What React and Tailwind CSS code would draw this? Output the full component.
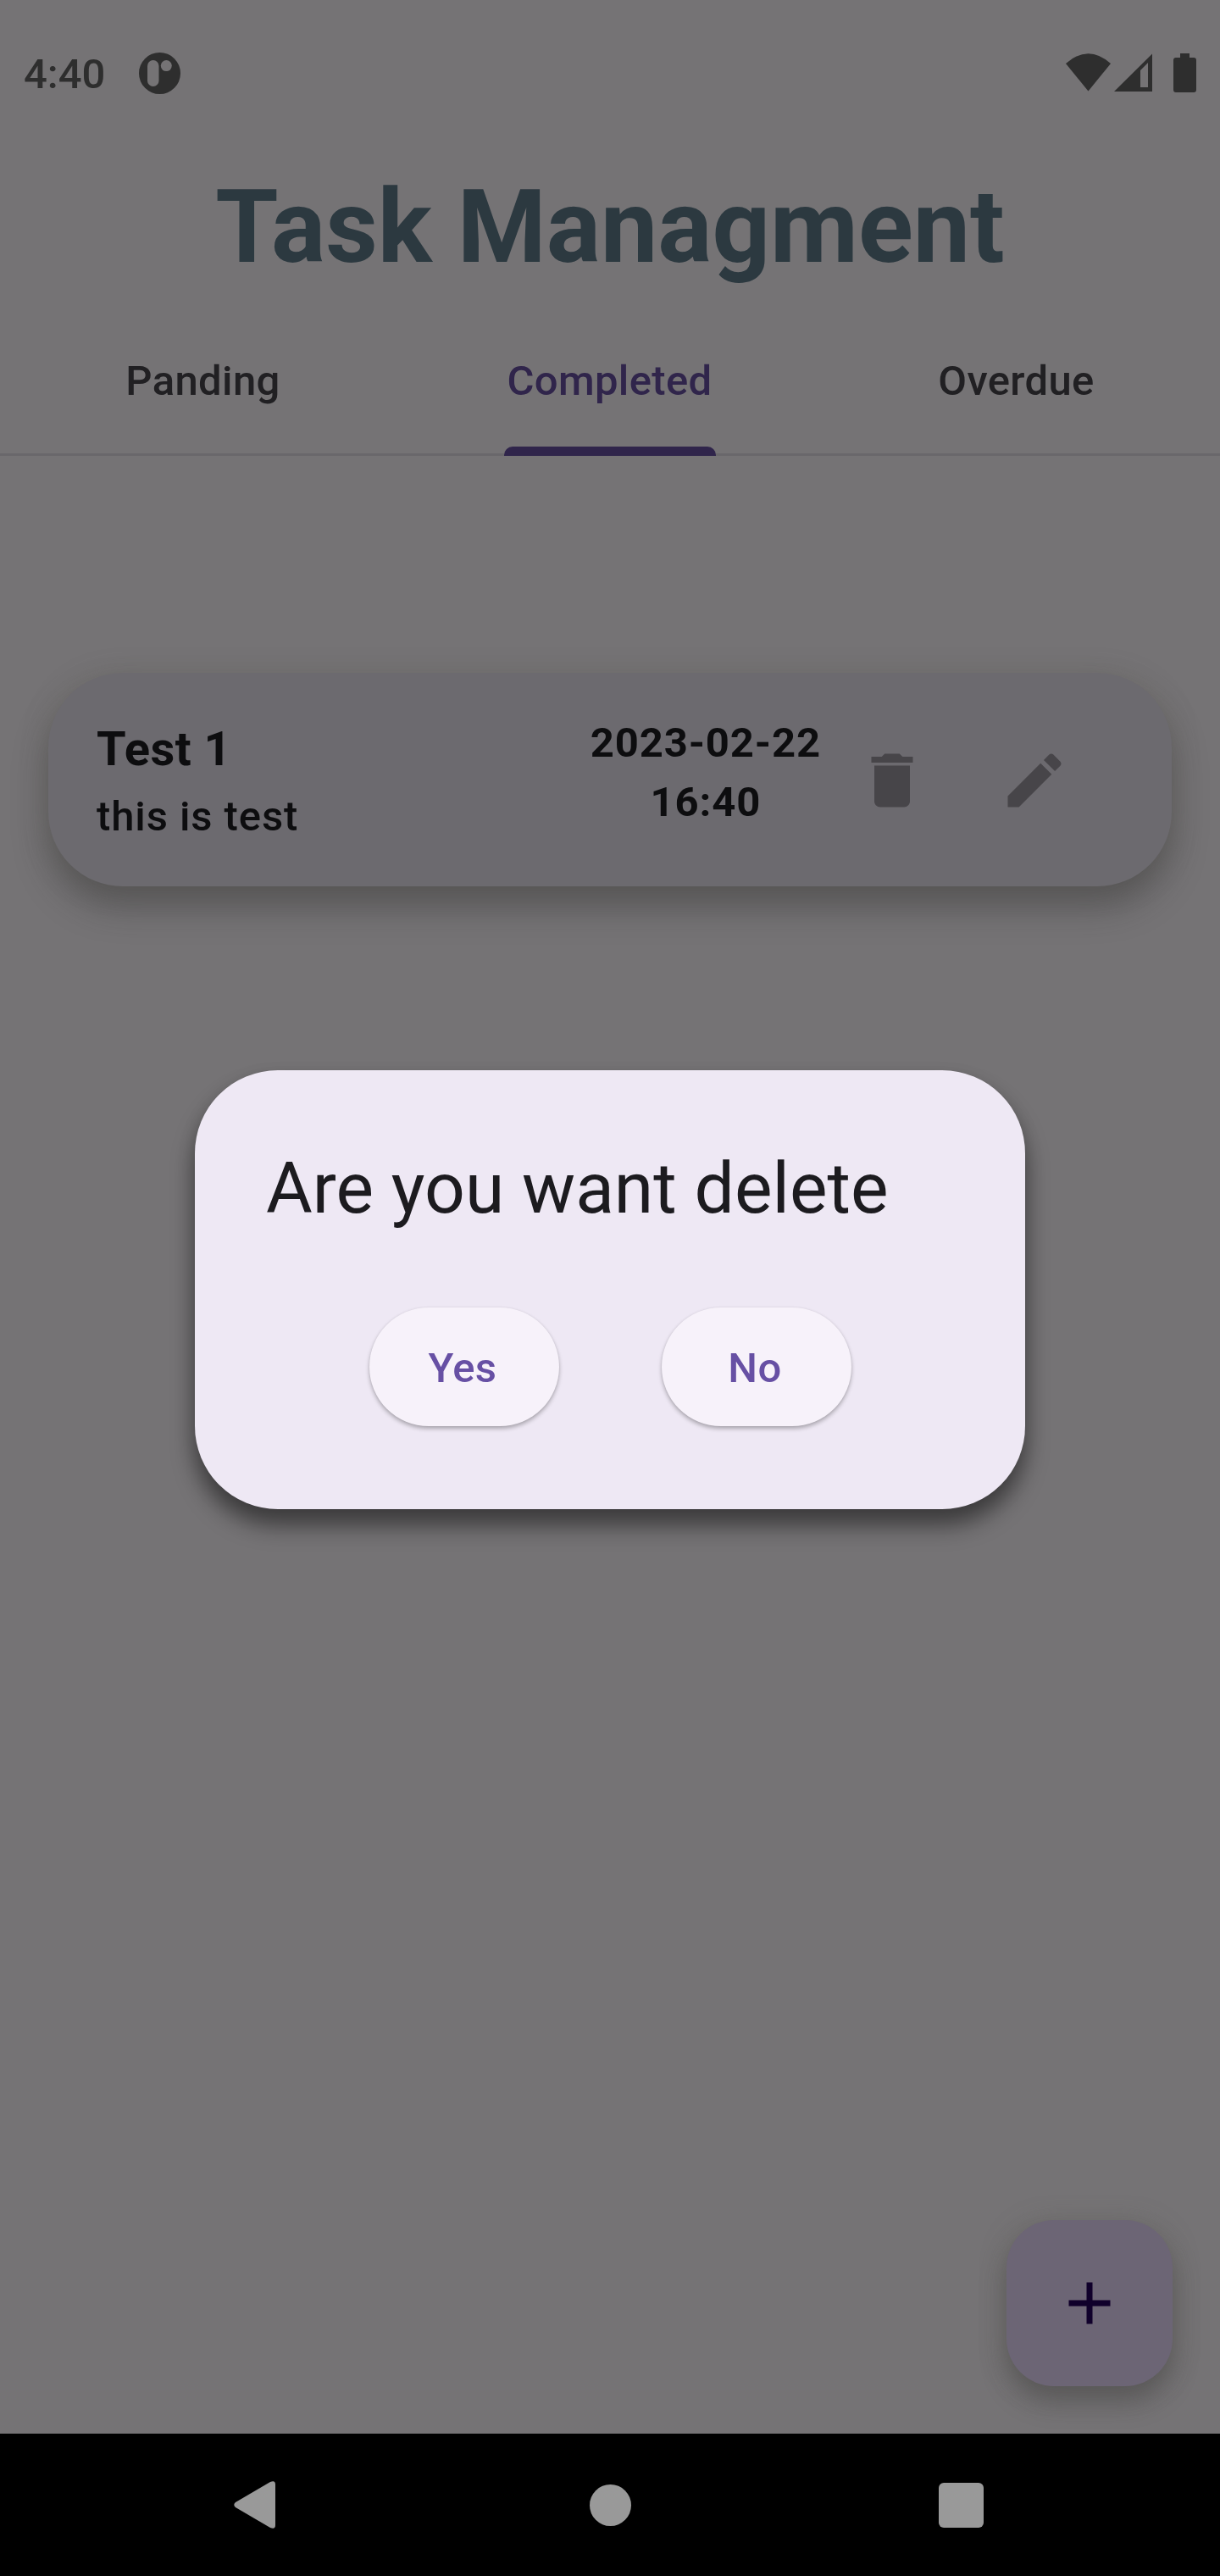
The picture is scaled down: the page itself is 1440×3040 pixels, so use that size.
import { useState } from "react";

function StatusBar() {
  return (
    <header className="flex h-[172px] items-center px-7 text-[#2e2e2e]">
      <span className="pt-[4px] text-[49px] leading-[56px] font-medium">4:40</span>
      <svg className="ml-[40px] size-[49px]" viewBox="0 0 49 49">
        <circle cx="24.5" cy="24.5" r="24.5" fill="currentColor" />
        <rect x="10" y="9" width="13.5" height="31" rx="6.75" fill="#757375" />
        <circle cx="32.3" cy="15.6" r="6.5" fill="#757375" />
      </svg>
      <svg className="ml-auto h-[46px] w-[154px] shrink-0" viewBox="1258 63 154 46" fill="currentColor">
        <path d="M1258 75 Q1284.5 51.500 1311 75 L1284.500 107.500 Z" />
        <path fillRule="evenodd" d="M1315 108 L1360 63.500 V108 Z M1346 83 V103 H1355 V74 Z" />
        <path d="M1393 63h11v5h5a3 3 0 0 1 3 3v35a3 3 0 0 1-3 3h-21a3 3 0 0 1-3-3v-35a3 3 0 0 1 3-3h5z" />
      </svg>
    </header>
  );
}

function Tabs({ active, onSelect }) {
  return (
    <nav className="grid h-[176px] grid-cols-3 border-b-[3px] border-[#69676b]">
      {["Panding", "Completed", "Overdue"].map((name) => (
        <button key={name} onClick={() => onSelect(name)} className="flex items-center justify-center pr-px">
          <span
            className={
              "relative flex h-full items-center pt-[2px] text-[49px] font-medium tracking-[0.35px] " +
              (active === name ? "text-[#30254b]" : "text-[#212023]")
            }
          >
            {name}
            {active === name && (
              <span className="absolute -right-[4px] -bottom-[3px] -left-[3px] h-[11px] rounded-t-[10px] bg-[#30254b]" />
            )}
          </span>
        </button>
      ))}
    </nav>
  );
}

function TaskCard({ title, note, date, time }) {
  return (
    <article className="mx-[57px] mt-[256px] flex h-[252px] rounded-[88px] bg-[#6c6a6f] pl-[57px] text-[#0d0d0f] shadow-[0_24px_40px_rgba(48,48,48,0.42),0_3px_28px_rgba(112,110,104,0.5)]">
      <div className="flex-1 pt-[48px]">
        <h2 className="text-[56px] leading-[84px] font-bold tracking-[0.5px]">{title}</h2>
        <p className="mt-[3px] text-[49px] leading-[70px] font-medium tracking-[0.9px]">{note}</p>
      </div>
      <div className="pt-[48px] text-center text-[49px] leading-[70px] font-bold tracking-[0.875px]">
        <p>{date}</p>
        <p>{time}</p>
      </div>
      <div className="mr-[78px] flex items-center pt-[2px] text-[#474549]">
        <button className="flex w-[168px] justify-center">
          <svg className="size-[84px]" viewBox="0 0 24 24" fill="currentColor">
            <path d="M6 19c0 1.100.9 2 2 2h8c1.100 0 2-.9 2-2V7H6v12zM19 4h-3.500l-1-1h-5l-1 1H5v2h14V4z" />
          </svg>
        </button>
        <button className="flex w-[168px] justify-center">
          <svg className="size-[84px]" viewBox="0 0 24 24" fill="currentColor">
            <path d="M3 17.250V21h3.750L17.810 9.940l-3.750-3.750L3 17.250zM20.710 7.040c.39-.39.39-1.020 0-1.410l-2.340-2.340c-.39-.39-1.020-.39-1.410 0l-1.830 1.830 3.750 3.750 1.830-1.830z" />
          </svg>
        </button>
      </div>
    </article>
  );
}

function ConfirmDialog() {
  const button =
    "h-[140px] w-[224px] rounded-full bg-[#f7f2fa] pt-[3px] pr-[3px] text-[49px] font-medium tracking-[0.35px] text-[#6750a4] shadow-[0_3px_5px_rgba(0,0,0,0.28),0_0_3px_rgba(0,0,0,0.06)]";
  return (
    <div
      role="dialog"
      className="absolute top-[1263px] left-[230px] h-[518px] w-[980px] rounded-[98px] bg-[#eee8f4] pt-[84px] shadow-[0_20px_28px_rgba(0,0,0,0.42),0_10px_22px_rgba(0,0,0,0.14)]"
    >
      <h2 className="pl-[84px] text-[84px] leading-[112px] text-[#1c1b1f]">Are you want delete</h2>
      <div className="mt-[84px] flex justify-center gap-[121px]">
        <button className={button}>Yes</button>
        <button className={button}>No</button>
      </div>
    </div>
  );
}

function NavigationBar() {
  return (
    <footer className="flex h-[168px] items-center justify-between bg-black pr-[279px] pl-[276px] text-[#999999]">
      <svg className="h-[56px] w-[49px]" viewBox="0 0 49 56" fill="currentColor">
        <path d="M2 25 L43 1 Q49 -1.500 49 4 V52 Q49 57.500 43 55 L2 31 Q-1.500 28 2 25Z" />
      </svg>
      <span className="ml-[7px] size-[49px] rounded-full bg-[#999999]" />
      <span className="h-[53px] w-[53px] rounded-[6px] bg-[#999999]" />
    </footer>
  );
}

export default function App() {
  const [tab, setTab] = useState("Completed");
  return (
    <div className="relative flex h-[3040px] w-[1440px] flex-col overflow-hidden bg-[#757375] font-['Roboto',sans-serif]">
      <StatusBar />
      <h1 className="flex h-[190px] items-center justify-center pt-px text-[120px] leading-none font-bold text-[#2c3940]">
        Task Managment
      </h1>
      <Tabs active={tab} onSelect={setTab} />
      <main className="flex-1">
        <TaskCard title="Test 1" note="this is test" date="2023-02-22" time="16:40" />
      </main>
      <button className="absolute top-[2620px] left-[1188px] flex size-[196px] items-center justify-center rounded-[56px] bg-[#6c6575] text-[#10002b] shadow-[0_18px_30px_rgba(48,48,48,0.36),0_3px_28px_rgba(108,106,100,0.5)]">
        <svg className="size-[84px]" viewBox="0 0 24 24" fill="currentColor">
          <path d="M19 13h-6v6h-2v-6H5v-2h6V5h2v6h6v2z" />
        </svg>
      </button>
      <NavigationBar />
      <ConfirmDialog />
    </div>
  );
}
